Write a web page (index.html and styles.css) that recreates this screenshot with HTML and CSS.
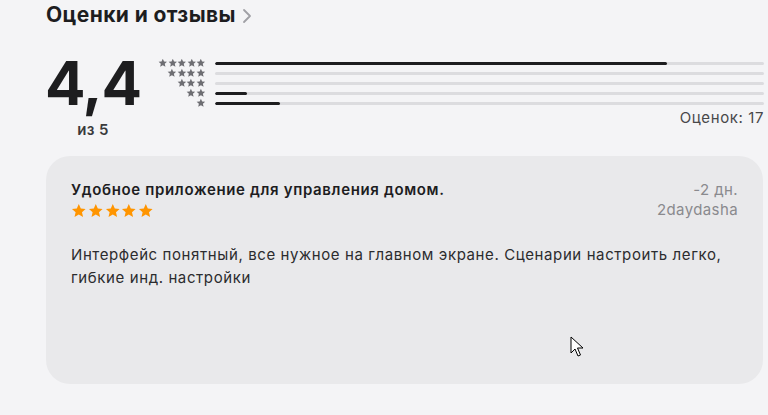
FILE: index.html
```html
<!DOCTYPE html>
<html lang="ru">
<head>
<meta charset="utf-8">
<title>Оценки и отзывы</title>
<link rel="stylesheet" href="styles.css">
</head>
<body>
<svg width="0" height="0" class="defs">
  <defs>
    <symbol id="star" viewBox="0 0 24 24">
      <path d="M12 1.6l3.1 6.9 7.4.7-5.6 5 1.7 7.4L12 17.8l-6.6 3.8 1.7-7.4-5.6-5 7.4-.7z"/>
    </symbol>
  </defs>
</svg>
<main class="page">
  <h2 class="section-title">Оценки и отзывы <span class="chev"><svg width="10" height="16" viewBox="0 0 10 16"><path d="M2 2l6 6-6 6" fill="none" stroke="currentColor" stroke-width="1.8" stroke-linecap="round" stroke-linejoin="round"/></svg></span></h2>

  <section class="summary">
    <div class="score">
      <div class="score-value">4,4</div>
      <div class="score-of">из 5</div>
    </div>
    <div class="hist">
      <div class="hist-rows">
        <div class="hist-row">
          <div class="mini-stars"><svg><use href="#star"/></svg><svg><use href="#star"/></svg><svg><use href="#star"/></svg><svg><use href="#star"/></svg><svg><use href="#star"/></svg></div>
          <div class="track"><div class="fill" style="width:82.4%"></div></div>
        </div>
        <div class="hist-row">
          <div class="mini-stars"><svg><use href="#star"/></svg><svg><use href="#star"/></svg><svg><use href="#star"/></svg><svg><use href="#star"/></svg></div>
          <div class="track"><div class="fill" style="width:0%"></div></div>
        </div>
        <div class="hist-row">
          <div class="mini-stars"><svg><use href="#star"/></svg><svg><use href="#star"/></svg><svg><use href="#star"/></svg></div>
          <div class="track"><div class="fill" style="width:0%"></div></div>
        </div>
        <div class="hist-row">
          <div class="mini-stars"><svg><use href="#star"/></svg><svg><use href="#star"/></svg></div>
          <div class="track"><div class="fill" style="width:5.9%"></div></div>
        </div>
        <div class="hist-row">
          <div class="mini-stars"><svg><use href="#star"/></svg></div>
          <div class="track"><div class="fill" style="width:11.8%"></div></div>
        </div>
      </div>
      <div class="count">Оценок: 17</div>
    </div>
  </section>

  <article class="review">
    <div class="review-head">
      <div class="review-left">
        <h3 class="review-title">Удобное приложение для управления домом.</h3>
        <div class="review-stars"><svg><use href="#star"/></svg><svg><use href="#star"/></svg><svg><use href="#star"/></svg><svg><use href="#star"/></svg><svg><use href="#star"/></svg></div>
      </div>
      <div class="review-meta">
        <div>-2 дн.</div>
        <div>2daydasha</div>
      </div>
    </div>
    <p class="review-body">Интерфейс понятный, все нужное на главном экране. Сценарии настроить легко, гибкие инд. настройки</p>
    <svg class="cursor" width="14" height="22" viewBox="0 0 14 22"><path d="M1 1v16l4-4 3 7 2.5-1-3-7h5.5z" fill="#fff" stroke="#000" stroke-width="1" stroke-linejoin="round"/></svg>
  </article>
</main>
</body>
</html>
```

FILE: styles.css
```css
* { box-sizing: border-box; }
html, body { margin: 0; padding: 0; }
body {
  background: #f4f4f6;
  font-family: Inter, "Noto Sans", "Liberation Sans", sans-serif;
  color: #1d1d1f;
  width: 768px;
  height: 415px;
  overflow: hidden;
}
.defs { position: absolute; }
.page {
  padding: 2px 4px 0 46px;
}
.section-title {
  margin: 0;
  font-size: 21px;
  line-height: 26px;
  font-weight: 700;
  letter-spacing: 0.4px;
  color: #1d1d1f;
  display: flex;
  align-items: center;
  gap: 6px;
}
.chev {
  color: #a0a0a5;
  display: flex;
  align-items: center;
  padding-top: 1px;
}
.summary {
  display: flex;
  margin-top: 25px;
}
.score {
  width: 94px;
  display: flex;
  flex-direction: column;
  align-items: center;
}
.score-value {
  font-size: 60px;
  font-weight: 700;
  line-height: 60px;
  letter-spacing: -1px;
  color: #1d1d1f;
}
.score-of {
  font-size: 15px;
  font-weight: 600;
  color: #3a3a3c;
  line-height: 20px;
  margin-top: 7px;
  letter-spacing: 0.3px;
}
.hist {
  flex: 1;
  margin-left: 18px;
  padding-top: 5px;
}
.hist-rows {
  display: flex;
  flex-direction: column;
}
.hist-row {
  display: flex;
  align-items: center;
  height: 10px;
}
.mini-stars {
  width: 48px;
  display: flex;
  justify-content: flex-end;
  fill: #6e6e73;
}
.mini-stars svg {
  width: 9.8px;
  height: 9.8px;
}
.track {
  flex: 1;
  margin-left: 9px;
  height: 3px;
  background: #dcdcdf;
  border-radius: 2px;
  overflow: hidden;
}
.fill {
  height: 100%;
  background: #1d1d1f;
  border-radius: 2px;
}
.count {
  text-align: right;
  font-size: 15px;
  line-height: 20px;
  color: #48484a;
  margin-top: 0;
  letter-spacing: 0.6px;
}
.review {
  position: relative;
  margin-top: 16px;
  width: 717px;
  height: 228px;
  background: #e9e9eb;
  border-radius: 24px;
  padding: 24px 25px 0 25px;
}
.review-head {
  display: flex;
  justify-content: space-between;
}
.review-title {
  margin: 0;
  font-size: 15px;
  line-height: 20px;
  font-weight: 600;
  letter-spacing: 0.65px;
  color: #1d1d1f;
}
.review-stars {
  display: flex;
  gap: 1.2px;
  fill: #ff9500;
  margin-top: 3px;
}
.review-stars svg {
  width: 15.6px;
  height: 15.6px;
}
.review-meta {
  text-align: right;
  font-size: 15px;
  line-height: 20px;
  color: #8a8a8e;
  letter-spacing: 0.4px;
}
.review-body {
  margin: 23px 0 0;
  font-size: 15px;
  line-height: 23px;
  color: #2c2c2e;
  letter-spacing: 0.6px;
  max-width: 660px;
}
.cursor {
  position: absolute;
  left: 524px;
  top: 180px;
}
```
